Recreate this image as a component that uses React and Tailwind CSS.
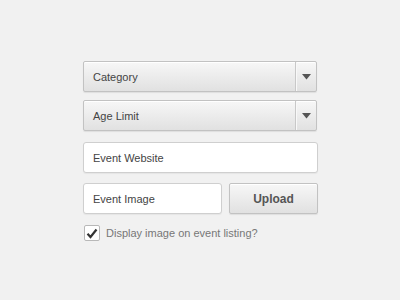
import React from "react";

const Select = ({ label }) => (
  <div className="w-[234px] h-[31px] flex flex-row border border-[#c2c2c2] rounded-[2px] bg-gradient-to-b from-[#f7f7f7] to-[#e1e1e1] shadow-[0_1px_1px_rgba(0,0,0,0.08),inset_0_1px_0_#ffffff]">
    <div className="flex-1 flex items-center pl-[9px] pt-[1px] text-[11px] text-[#444]">{label}</div>
    <div className="w-[21px] border-l border-[#c8c8c8] flex items-center justify-center shadow-[inset_1px_0_0_#f8f8f8]">
      <svg width="9" height="6" viewBox="0 0 9 6">
        <path d="M0 0 H9 L4.5 5.5 Z" fill="#555" />
      </svg>
    </div>
  </div>
);

const Field = ({ label, w }) => (
  <div className={`${w} h-[31px] flex items-center pl-[9px] pt-[1px] bg-white border border-[#cfcfcf] rounded-[3px] text-[11px] text-[#444] shadow-[0_1px_1px_rgba(0,0,0,0.05)]`}>
    {label}
  </div>
);

export default function App() {
  return (
    <div className="w-[400px] h-[300px] bg-[#f1f1f1] font-['Liberation_Sans',Arial,sans-serif] pl-[83px] pt-[61px]">
      <div className="flex flex-col">
        <Select label="Category" />
        <div className="mt-[8px]">
          <Select label="Age Limit" />
        </div>
        <div className="mt-[11px]">
          <Field label="Event Website" w="w-[235px]" />
        </div>
        <div className="mt-[10px] flex flex-row gap-[7px]">
          <Field label="Event Image" w="w-[139px]" />
          <button className="w-[89px] h-[31px] border border-[#c2c2c2] rounded-[2px] bg-gradient-to-b from-[#f7f7f7] to-[#e1e1e1] text-[12px] font-bold text-[#555] shadow-[0_1px_1px_rgba(0,0,0,0.08),inset_0_1px_0_#ffffff]">
            Upload
          </button>
        </div>
        <div className="mt-[11px] flex flex-row items-center gap-[6px] pl-[1px]">
          <div className="w-[16px] h-[16px] bg-white border border-[#b8b8b8] rounded-[2px] flex items-center justify-center">
            <svg width="12" height="11" viewBox="0 0 12 11">
              <path d="M1.5 5.8 L4.5 9 L10.5 1.5" fill="none" stroke="#333" strokeWidth="2.2" />
            </svg>
          </div>
          <span className="text-[11px] text-[#777]">Display image on event listing?</span>
        </div>
      </div>
    </div>
  );
}
